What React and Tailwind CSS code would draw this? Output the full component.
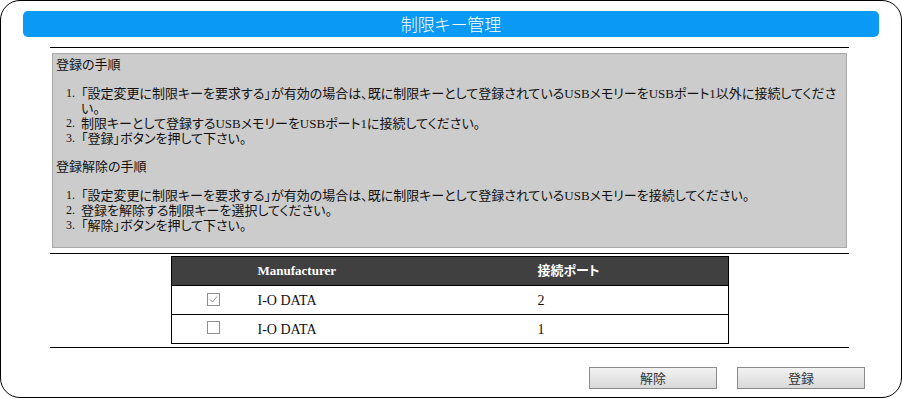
import React from 'react'

const font = "font-['Liberation_Serif','Noto_Sans_CJK_JP',serif]"

const Steps = ({ items }) => (
  <ol className="mt-[14px]">
    {items.map((it, i) => (
      <li key={i} className="flex leading-[15px]">
        <span className="w-[19px] shrink-0 text-right mr-[6px] text-[12px]">{i + 1}.</span>
        <span>{it}</span>
      </li>
    ))}
  </ol>
)

const Check = ({ on }) => (
  <span className="inline-flex w-[13px] h-[13px] border border-[#8f8f8f] bg-white items-center justify-center">
    {on && (
      <svg width="11" height="11" viewBox="0 0 11 11">
        <path d="M2 5.5 L4.5 8 L9 2.5" fill="none" stroke="#8a8a8a" strokeWidth="1" />
      </svg>
    )}
  </span>
)

const Btn = ({ children }) => (
  <button className="w-[128px] h-[22px] border border-[#8a8a8a] bg-gradient-to-b from-[#f2f2f2] to-[#d9d9d9] text-[13px] text-[#333] leading-[20px] font-['Noto_Sans_CJK_JP',sans-serif]">
    {children}
  </button>
)

const App = () => {
  const rows = [
    { on: true, maker: 'I-O DATA', port: '2' },
    { on: false, maker: 'I-O DATA', port: '1' },
  ]
  return (
    <div className={`w-[902px] h-[399px] bg-white ${font} text-[13px] text-[#111] [font-feature-settings:'palt']`}>
      <div className="h-[398px] border-[1.5px] border-black rounded-[20px] pt-[10px] flex flex-col">
        <div className="mx-[22px] h-[26px] bg-[#0a99f5] rounded-[5px] flex items-center justify-center text-white text-[17px] font-light font-['Noto_Sans_CJK_JP',sans-serif]">
          制限キー管理
        </div>

        <div className="ml-[49px] w-[799px] mt-[10px] border-t border-black">
          <div className="mx-[2px] mt-[5px] h-[195px] bg-[#cccccc] border border-[#a8a8a8] pl-[3px] pt-[3px]">
            <p className="leading-[15px]">登録の手順</p>
            <Steps
              items={[
                <>
                  <span className="whitespace-nowrap">「設定変更に制限キーを要求する」が有効の場合は、既に制限キーとして登録されているUSBメモリーをUSBポート1以外に接続してくださ</span>
                  <br />い。
                </>,
                '制限キーとして登録するUSBメモリーをUSBポート1に接続してください。',
                '「登録」ボタンを押して下さい。',
              ]}
            />
            <p className="leading-[15px] mt-[13px]">登録解除の手順</p>
            <Steps
              items={[
                '「設定変更に制限キーを要求する」が有効の場合は、既に制限キーとして登録されているUSBメモリーを接続してください。',
                '登録を解除する制限キーを選択してください。',
                '「解除」ボタンを押して下さい。',
              ]}
            />
          </div>

          <div className="mt-[5px] border-t border-black pt-[2px] pb-[3px] border-b">
            <table className="ml-[121px] w-[558px] border-collapse border border-black text-[14px]">
              <thead>
                <tr className="h-[29px] bg-[#404040] text-white text-[13px]">
                  <th className="w-[84px]"></th>
                  <th className="w-[280px] text-left pl-[2px] font-bold">Manufacturer</th>
                  <th className="text-left pl-[2px] font-bold">接続ポート</th>
                </tr>
              </thead>
              <tbody>
                {rows.map((r, i) => (
                  <tr key={i} className="h-[29px] border-t border-black">
                    <td className="text-center align-middle">
                      <span className="inline-flex pt-[3px]"><Check on={r.on} /></span>
                    </td>
                    <td className="pl-[2px]">{r.maker}</td>
                    <td className="pl-[2px]">{r.port}</td>
                  </tr>
                ))}
              </tbody>
            </table>
          </div>
        </div>

        <div className="mt-[19px] flex justify-end gap-[20px] pr-[36px]">
          <Btn>解除</Btn>
          <Btn>登録</Btn>
        </div>
      </div>
    </div>
  )
}

export default App
